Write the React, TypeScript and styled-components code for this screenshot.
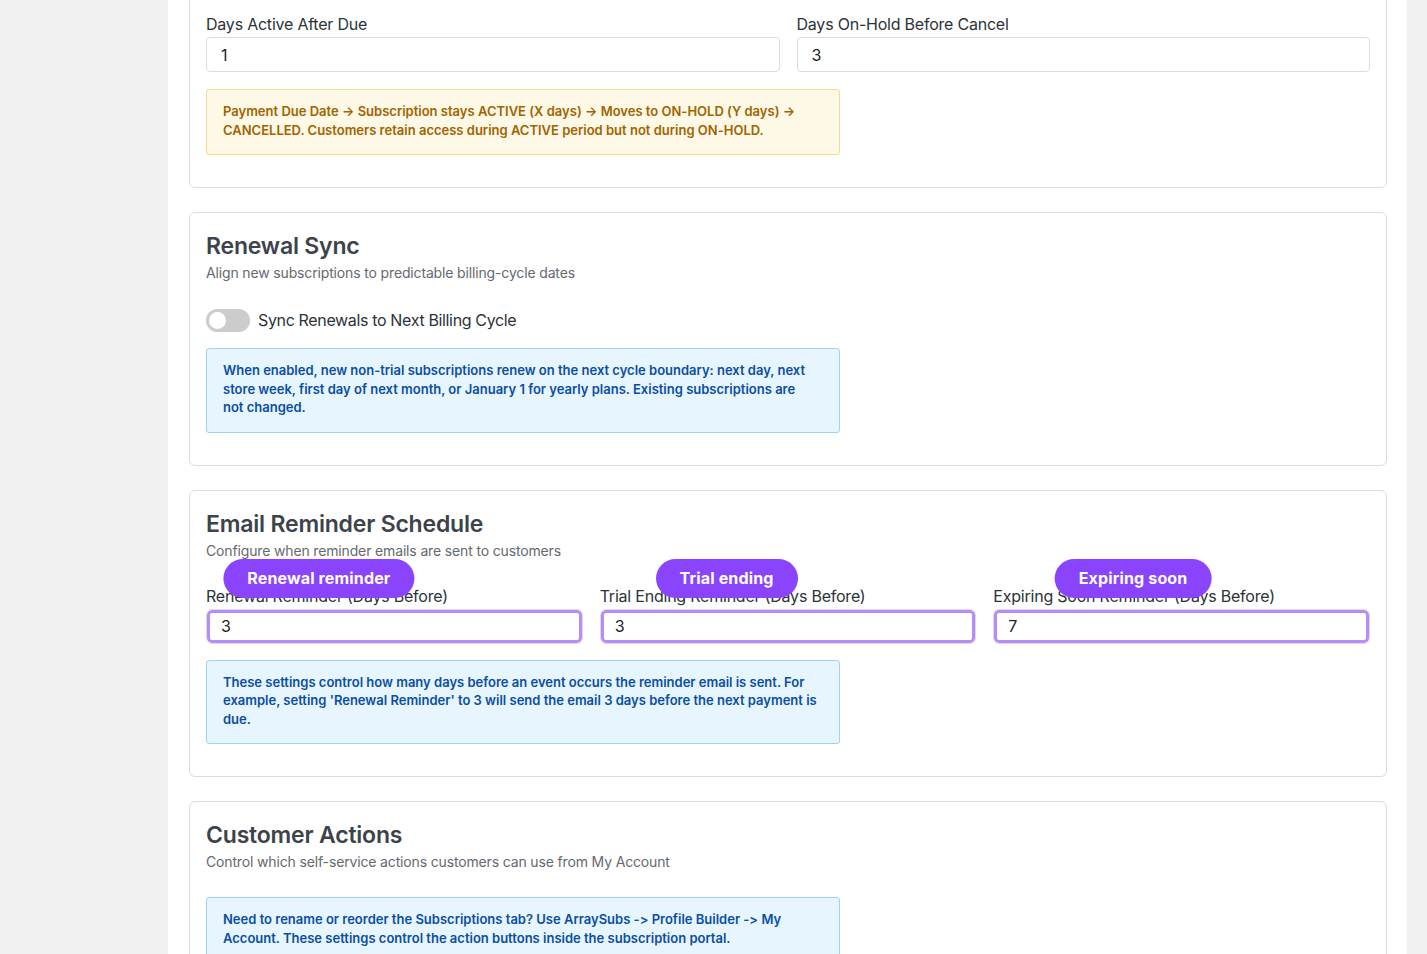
import React from 'react';
import styled, { createGlobalStyle } from 'styled-components';

const GlobalStyle = createGlobalStyle`
  html, body {
    margin: 0;
    padding: 0;
    background: #f0f0f1;
    font-family: Inter, "Noto Sans", "Liberation Sans", sans-serif;
    font-feature-settings: "calt" 0;
    overflow: hidden;
  }
`;

const Shell = styled.div`
  padding: 0 20px 0 168px;
  height: 954px;
  overflow: hidden;
`;

const Panel = styled.main`
  background: #fff;
  padding: 0 20px 0 21px;
  min-height: 100%;
  display: flex;
  flex-direction: column;
  gap: 24px;
`;

const Card = styled.section<{ $cut?: boolean }>`
  border: 1px solid #dcdcde;
  border-radius: 6px;
  padding: 17px 16px 16px;
  margin-top: ${(p) => (p.$cut ? '-4px' : '0')};
  border-top-left-radius: ${(p) => (p.$cut ? '0' : '6px')};
  border-top-right-radius: ${(p) => (p.$cut ? '0' : '6px')};
`;

const Title = styled.h2`
  margin: 0 0 1px;
  font-size: 23px;
  line-height: 32px;
  font-weight: 600;
  color: #3c434a;
  letter-spacing: -0.2px;
`;

const Subtitle = styled.p`
  margin: 0 0 25px;
  font-size: 14px;
  line-height: 20px;
  color: #646970;
  letter-spacing: -0.15px;
`;

const FieldGrid = styled.div<{ $cols: number }>`
  display: grid;
  grid-template-columns: repeat(${(p) => p.$cols}, 1fr);
  column-gap: 17px;
  margin-bottom: ${(p) => (p.$cols > 2 ? '16px' : '17px')};
`;

const Field = styled.div`
  display: flex;
  flex-direction: column;
  align-items: flex-start;
`;

const LabelWrap = styled.div`
  position: relative;
  margin-bottom: 3px;
`;

const Label = styled.label`
  font-size: 16px;
  line-height: 20px;
  color: #2c3338;
  letter-spacing: -0.22px;
  display: block;
`;

const Badge = styled.span<{ $shift: number }>`
  position: absolute;
  top: -27px;
  left: 50%;
  transform: translateX(calc(-50% + ${(p) => p.$shift}px));
  height: 39px;
  padding: 0 24px;
  border-radius: 20px;
  background: #8b44fd;
  color: #fff;
  font-size: 16px;
  font-weight: 700;
  letter-spacing: 0.15px;
  white-space: nowrap;
  display: flex;
  align-items: center;
`;

const Input = styled.input<{ $focus?: boolean }>`
  box-sizing: border-box;
  width: 100%;
  height: 35px;
  border: 1px solid #dcdcde;
  border-radius: ${(p) => (p.$focus ? '6px' : '4px')};
  padding: 0 14px;
  font-family: inherit;
  font-size: 16px;
  color: #1d2327;
  background: #fff;
  outline: none;
  box-shadow: ${(p) => (p.$focus ? 'inset 0 0 0 3px #b88cf8' : 'none')};
`;

const Notice = styled.div<{ $tone: 'info' | 'warn' }>`
  box-sizing: border-box;
  max-width: 634px;
  padding: 12px 22px 15px 16px;
  border-radius: 3px;
  border: 1px solid ${(p) => (p.$tone === 'warn' ? '#f5dc8c' : '#9fd3f6')};
  background: ${(p) => (p.$tone === 'warn' ? '#fef8e6' : '#e6f5fe')};
  color: ${(p) => (p.$tone === 'warn' ? '#a06400' : '#0b4ea2')};
  font-size: 13px;
  line-height: 18.5px;
  font-weight: 600;
  margin-bottom: 16px;
`;

const ToggleRow = styled.label`
  display: flex;
  align-items: center;
  gap: 8px;
  height: 24px;
  margin-bottom: 16px;
  font-size: 16px;
  letter-spacing: -0.35px;
  color: #2c3338;
`;

const Track = styled.span<{ $on?: boolean }>`
  position: relative;
  width: 44px;
  height: 23px;
  border-radius: 12px;
  background: ${(p) => (p.$on ? '#8b44fd' : '#cccccc')};
  flex-shrink: 0;
`;

const Knob = styled.span<{ $on?: boolean }>`
  position: absolute;
  top: 3px;
  left: ${(p) => (p.$on ? '24px' : '3px')};
  width: 17px;
  height: 17px;
  border-radius: 50%;
  background: #fff;
`;

const reminders = [
  { label: 'Renewal Reminder (Days Before)', badge: 'Renewal reminder', value: '3', shift: -8 },
  { label: 'Trial Ending Reminder (Days Before)', badge: 'Trial ending', value: '3', shift: -6 },
  { label: 'Expiring Soon Reminder (Days Before)', badge: 'Expiring soon', value: '7', shift: -1 },
];

const App = () => {
  return (
    <>
      <GlobalStyle />
      <Shell>
        <Panel>
          <Card $cut>
            <FieldGrid $cols={2}>
              <Field>
                <LabelWrap>
                  <Label>Days Active After Due</Label>
                </LabelWrap>
                <Input defaultValue="1" />
              </Field>
              <Field>
                <LabelWrap>
                  <Label>Days On-Hold Before Cancel</Label>
                </LabelWrap>
                <Input defaultValue="3" />
              </Field>
            </FieldGrid>
            <Notice $tone="warn">
              Payment Due Date → Subscription stays ACTIVE (X days) → Moves to ON-HOLD (Y days) →
              CANCELLED. Customers retain access during ACTIVE period but not during ON-HOLD.
            </Notice>
          </Card>

          <Card>
            <Title>Renewal Sync</Title>
            <Subtitle>Align new subscriptions to predictable billing-cycle dates</Subtitle>
            <ToggleRow>
              <Track>
                <Knob />
              </Track>
              Sync Renewals to Next Billing Cycle
            </ToggleRow>
            <Notice $tone="info">
              When enabled, new non-trial subscriptions renew on the next cycle boundary: next day, next
              store week, first day of next month, or January 1 for yearly plans. Existing subscriptions are
              not changed.
            </Notice>
          </Card>

          <Card>
            <Title>Email Reminder Schedule</Title>
            <Subtitle>Configure when reminder emails are sent to customers</Subtitle>
            <FieldGrid $cols={3}>
              {reminders.map((r) => (
                <Field key={r.label}>
                  <LabelWrap>
                    <Label>{r.label}</Label>
                    <Badge $shift={r.shift}>{r.badge}</Badge>
                  </LabelWrap>
                  <Input $focus defaultValue={r.value} />
                </Field>
              ))}
            </FieldGrid>
            <Notice $tone="info">
              These settings control how many days before an event occurs the reminder email is sent. For
              example, setting 'Renewal Reminder' to 3 will send the email 3 days before the next payment is
              due.
            </Notice>
          </Card>

          <Card>
            <Title>Customer Actions</Title>
            <Subtitle>Control which self-service actions customers can use from My Account</Subtitle>
            <Notice $tone="info">
              Need to rename or reorder the Subscriptions tab? Use ArraySubs -&gt; Profile Builder -&gt; My
              Account. These settings control the action buttons inside the subscription portal.
            </Notice>
          </Card>
        </Panel>
      </Shell>
    </>
  );
};

export default App;
